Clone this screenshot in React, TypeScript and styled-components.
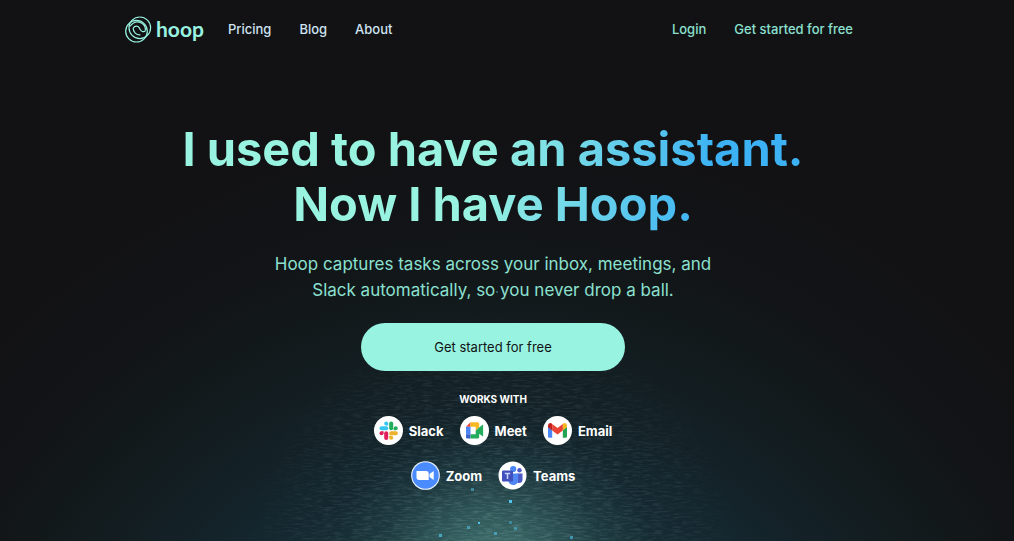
import React from 'react';
import styled, { createGlobalStyle } from 'styled-components';

const GlobalStyle = createGlobalStyle`
  * { box-sizing: border-box; }
  body {
    margin: 0;
    background: #121214;
    font-family: Inter, "Liberation Sans", sans-serif;
    -webkit-font-smoothing: antialiased;
  }
`;

const Page = styled.div`
  position: relative;
  min-height: 100vh;
  padding-right: 28px;
  overflow: hidden;
`;

const Backdrop = styled.div`
  position: absolute;
  inset: 0 28px 0 0;
  pointer-events: none;

  &::before {
    content: "";
    position: absolute;
    inset: 0 -28px 0 0;
    background:
      radial-gradient(ellipse 160px 130px at calc(50% - 14px) calc(100% + 16px), rgba(90, 152, 142, 0.62) 0%, rgba(80, 140, 132, 0.42) 35%, rgba(60, 115, 115, 0.16) 70%, transparent 100%),
      radial-gradient(circle at calc(50% - 14px) calc(100% + 280px), #18313a 280px, #14262e 370px, #131e22 460px, #12181a 540px, #121417 600px, #121214 690px);
  }
`;

const Sparkles = styled.svg`
  position: absolute;
  left: calc(50% - 300px);
  bottom: 0;
  width: 600px;
  height: 270px;
`;

const Header = styled.header`
  position: relative;
  display: flex;
  align-items: center;
  max-width: 736px;
  height: 58px;
  margin: 0 auto;
  padding-right: 8px;
`;

const Brand = styled.a`
  display: flex;
  align-items: center;
  gap: 4px;
  margin-right: 24px;
  color: #98f3e0;
  text-decoration: none;
`;

const BrandName = styled.span`
  font: 700 21px/26px Lato, sans-serif;
`;

const Nav = styled.nav<{ $end?: boolean }>`
  display: flex;
  gap: 28px;
  margin-left: ${(p) => (p.$end ? 'auto' : '0')};
`;

const NavLink = styled.a<{ $accent?: boolean }>`
  font-size: 13px;
  font-weight: 500;
  line-height: 20px;
  color: ${(p) => (p.$accent ? '#8ce0d0' : '#cfe3f2')};
  text-decoration: none;
`;

const Hero = styled.main`
  position: relative;
  display: flex;
  flex-direction: column;
  align-items: center;
  padding: 63px 16px 48px;
  text-align: center;
`;

const Title = styled.h1`
  margin: 0;
  font: 700 47px/55px Inter, sans-serif;
  color: transparent;
  background: linear-gradient(100deg, #98f3e0 48%, #3cb2f4 84%);
  background-clip: text;
  -webkit-background-clip: text;
`;

const Lead = styled.p`
  max-width: 460px;
  margin: 20px 0 0;
  font-size: 17px;
  line-height: 26px;
  color: #8ce0d0;
`;

const CallToAction = styled.button`
  width: 264px;
  height: 48px;
  margin-top: 20px;
  border: 0;
  border-radius: 24px;
  background: #98f3e0;
  color: #121214;
  font: 400 13px/20px Inter, sans-serif;
  cursor: pointer;
`;

const WorksWith = styled.h2`
  margin: 21px 0 0;
  font-size: 10px;
  font-weight: 700;
  line-height: 14px;
  color: #fff;
`;

const Apps = styled.ul`
  display: flex;
  flex-wrap: wrap;
  justify-content: center;
  gap: 16px;
  max-width: 260px;
  margin: 10px 0 0;
  padding: 0;
  list-style: none;
`;

const AppItem = styled.li`
  display: flex;
  align-items: center;
  gap: 6px;
  font-size: 13px;
  font-weight: 700;
  line-height: 20px;
  color: #fff;
`;

const AppIcon = styled.svg`
  width: 29px;
  height: 29px;
`;

const Logo = () => (
  <svg width="27" height="27" viewBox="0 0 27 27" fill="none" stroke="#98f3e0" strokeWidth="1.2" aria-hidden="true">
    <circle cx="14.800" cy="11.800" r="10.800" />
    <circle cx="11.500" cy="15.200" r="10.800" />
    <path d="M4.800 10.500c2.800-3.600 6.800-5.600 11-3.800 3.400 1.500 4.900 4.800 4.600 8" />
    <path d="M8.200 12c1.600-2.400 4.600-2.300 5.900-.4 1.100 1.700 1.600 3.900 3.600 4.100 1.300.1 2.400-.5 2.700-1" />
    <path d="M8.200 12c-.3 3.900 3.300 7.300 7.200 6.900" />
  </svg>
);

const SlackIcon = () => (
  <AppIcon viewBox="0 0 29 29" aria-hidden="true">
    <circle cx="14.500" cy="14.500" r="14.500" fill="#fff" />
    <g fill="#36c5f0"><circle cx="12.200" cy="7.500" r="2" /><path d="M12.200 7.500h2v2h-2z" /><rect x="5.500" y="10.200" width="8.700" height="4" rx="2" /></g>
    <g fill="#22ac5b"><rect x="15.200" y="5.500" width="4" height="8.700" rx="2" /><circle cx="21.700" cy="12.200" r="2" /><path d="M19.700 12.200h2v2h-2z" /></g>
    <g fill="#ecb22e"><rect x="15.200" y="15.200" width="8.700" height="4" rx="2" /><circle cx="17.200" cy="21.700" r="2" /><path d="M15.200 19.700h2v2h-2z" /></g>
    <g fill="#e01e5a"><rect x="10.200" y="15.200" width="4" height="8.700" rx="2" /><circle cx="7.500" cy="17.200" r="2" /><path d="M7.500 15.200h2v2h-2z" /></g>
  </AppIcon>
);

const MeetIcon = () => (
  <AppIcon viewBox="0 0 29 29" aria-hidden="true">
    <circle cx="14.500" cy="14.500" r="14.500" fill="#fff" />
    <path d="M10.500 6.300 6 10.800h4.500z" fill="#ea4335" />
    <path d="M6 10.800h4.500v7.400H6z" fill="#4a86f7" />
    <path d="M6 18.200h4.500v4.300h-3A1.500 1.500 0 0 1 6 21z" fill="#3a5fce" />
    <path d="M10.500 6.300h7.200A1.500 1.500 0 0 1 19.200 7.800v3.800l-3.500 3v-3.800h-5.200z" fill="#f9b820" />
    <path d="M10.500 18.200h5.200v-3.800l3.500-3 3-2.500c.5-.4.900-.1.900.4v10.400c0 .5-.4.8-.9.400l-3-2.400v3.300a1.500 1.500 0 0 1-1.500 1.500h-7.200z" fill="#22ac5b" />
  </AppIcon>
);

const EmailIcon = () => (
  <AppIcon viewBox="0 0 29 29" aria-hidden="true">
    <circle cx="14.500" cy="14.500" r="14.500" fill="#fff" />
    <path d="M5 11h4.200v10.800H6.400A1.400 1.400 0 0 1 5 20.400z" fill="#4a86f7" />
    <path d="M19.800 11H24v9.400a1.400 1.400 0 0 1-1.400 1.400h-2.800z" fill="#22a355" />
    <path d="M5 11.200V9.600c0-2.200 2.400-3.200 4-1.900l.2.200v6.600z" fill="#c5221f" />
    <path d="M24 11.200V9.600c0-2.200-2.400-3.200-4-1.900l-.2.200v6.600z" fill="#f9b820" />
    <path d="M9.200 7.900l5.300 4.100 5.300-4.100v6.600l-5.300 4-5.300-4z" fill="#ea4335" />
  </AppIcon>
);

const ZoomIcon = () => (
  <AppIcon viewBox="0 0 29 29" aria-hidden="true">
    <circle cx="14.500" cy="14.500" r="13.800" fill="#4a8cff" stroke="#eef5ff" strokeWidth="1.100" />
    <path d="M5.500 10h9.700c1.500 0 2.500 1 2.500 2.400V19H8c-1.500 0-2.500-1-2.500-2.400zM18.500 13l4.200-3v9l-4.200-3z" fill="#fff" />
  </AppIcon>
);

const TeamsIcon = () => (
  <AppIcon viewBox="0 0 29 29" aria-hidden="true">
    <circle cx="14.500" cy="14.500" r="14" fill="#fff" />
    <circle cx="21.500" cy="9.300" r="2.200" fill="#4d59c4" />
    <path d="M19 12.500h5.500v6c0 3-2.500 4.200-5 3.300z" fill="#4d59c4" />
    <circle cx="15.200" cy="8" r="3.100" fill="#4a86f7" />
    <path d="M10.500 12.500h9.700v6.700c0 6-9 6.400-9.700 1z" fill="#4f87f5" />
    <rect x="4" y="9.500" width="11" height="11" rx="1" fill="#4250bd" />
    <path d="M6.800 12.500h5.400M9.500 12.500v5.600" stroke="#c8d2ff" strokeWidth="1.500" />
  </AppIcon>
);

const apps = [
  { name: 'Slack', Icon: SlackIcon },
  { name: 'Meet', Icon: MeetIcon },
  { name: 'Email', Icon: EmailIcon },
  { name: 'Zoom', Icon: ZoomIcon },
  { name: 'Teams', Icon: TeamsIcon },
];

// x, y, size, opacity
const particles = [
  [279, 217, 3, 0.5],
  [317, 229, 3, 1],
  [286, 251, 2, 1],
  [275, 255, 3, 0.55],
  [317, 250, 3, 0.4],
  [322, 256, 3, 0.5],
  [247, 263, 3, 0.7],
  [378, 265, 3, 0.6],
  [302, 261, 3, 0.6],
  [304, 20, 2, 0.4],
];

export default function App() {
  return (
    <>
      <GlobalStyle />
      <Page>
        <Backdrop>
          <Sparkles viewBox="0 0 600 270" aria-hidden="true">
            <defs>
              <filter id="grain" x="0" y="0" width="100%" height="100%">
                <feTurbulence type="fractalNoise" baseFrequency="0.1 0.55" numOctaves="3" seed="4" />
                <feColorMatrix values="0 0 0 0 0.36  0 0 0 0 0.6  0 0 0 0 0.6  2 0 0 0 -0.85" />
              </filter>
              <radialGradient id="fade" gradientUnits="userSpaceOnUse" cx="300" cy="290" r="250">
                <stop offset="0" stopColor="#fff" stopOpacity="0.5" />
                <stop offset="0.4" stopColor="#fff" stopOpacity="0.34" />
                <stop offset="0.75" stopColor="#fff" stopOpacity="0.2" />
                <stop offset="1" stopColor="#fff" stopOpacity="0" />
              </radialGradient>
              <mask id="grainMask">
                <rect width="600" height="270" fill="url(#fade)" />
              </mask>
            </defs>
            <g mask="url(#grainMask)" opacity="0.6">
              <rect width="600" height="270" filter="url(#grain)" />
            </g>
            {particles.map(([x, y, size, opacity]) => (
              <rect key={`${x}-${y}`} x={x - 1} y={y} width={size} height={size} fill="#4fc3ea" opacity={opacity} />
            ))}
          </Sparkles>
        </Backdrop>
        <Header>
          <Brand href="#">
            <Logo />
            <BrandName>hoop</BrandName>
          </Brand>
          <Nav aria-label="Main">
            <NavLink href="#pricing">Pricing</NavLink>
            <NavLink href="#blog">Blog</NavLink>
            <NavLink href="#about">About</NavLink>
          </Nav>
          <Nav $end aria-label="Account">
            <NavLink $accent href="#login">Login</NavLink>
            <NavLink $accent href="#signup">Get started for free</NavLink>
          </Nav>
        </Header>
        <Hero>
          <Title>
            I used to have an assistant.
            <br />
            Now I have Hoop.
          </Title>
          <Lead>Hoop captures tasks across your inbox, meetings, and Slack automatically, so you never drop a ball.</Lead>
          <CallToAction type="button">Get started for free</CallToAction>
          <WorksWith>WORKS WITH</WorksWith>
          <Apps>
            {apps.map(({ name, Icon }) => (
              <AppItem key={name}>
                <Icon />
                {name}
              </AppItem>
            ))}
          </Apps>
        </Hero>
      </Page>
    </>
  );
}
